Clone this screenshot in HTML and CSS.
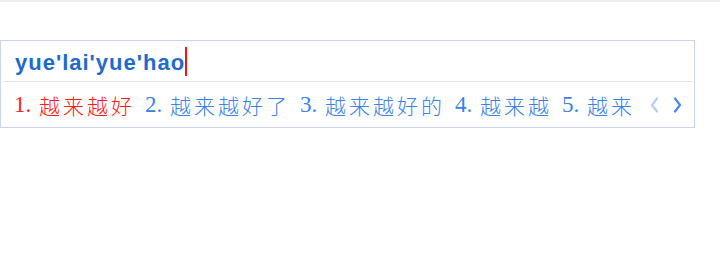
FILE: index.html
```html
<!DOCTYPE html>
<html lang="zh-CN">
<head>
<meta charset="utf-8">
<title>输入法候选框</title>
<link rel="stylesheet" href="styles.css">
</head>
<body>
<div class="topbar"></div>
<div class="ime">
  <div class="pinyin"><span class="code">yue'lai'yue'hao</span><span class="caret"></span></div>
  <div class="sep"></div>
  <div class="cands">
    <span class="cand active"><span class="num">1.</span><span class="word">越来越好</span></span>
    <span class="cand"><span class="num">2.</span><span class="word">越来越好了</span></span>
    <span class="cand"><span class="num">3.</span><span class="word">越来越好的</span></span>
    <span class="cand"><span class="num">4.</span><span class="word">越来越</span></span>
    <span class="cand"><span class="num">5.</span><span class="word">越来</span></span>
    <span class="pager">
      <svg class="arrow prev" width="9" height="16" viewBox="0 0 9 16"><polyline points="7,1.5 2,8 7,14.5" fill="none" stroke="#b7cdf4" stroke-width="2.2" stroke-linecap="round" stroke-linejoin="round"/></svg>
      <svg class="arrow next" width="9" height="16" viewBox="0 0 9 16"><polyline points="2,1.5 7,8 2,14.5" fill="none" stroke="#4a88ee" stroke-width="2.2" stroke-linecap="round" stroke-linejoin="round"/></svg>
    </span>
  </div>
</div>
</body>
</html>
```
FILE: styles.css
```css
html, body {
  margin: 0;
  padding: 0;
  background: #ffffff;
}
.topbar {
  height: 2px;
  background: #eeeeee;
}
.ime {
  box-sizing: border-box;
  width: 695px;
  margin-top: 38px;
  border: 1px solid #c9d5ea;
  background: #ffffff;
}
.pinyin {
  height: 40px;
  box-sizing: border-box;
  padding: 4px 0 0 14px;
  line-height: 36px;
  font-family: "Liberation Sans", Arial, sans-serif;
  font-weight: bold;
  font-size: 22px;
  letter-spacing: 1px;
  color: #1f6bcc;
  white-space: nowrap;
}
.code {
  display: inline-block;
  width: 170px;
}
.caret {
  display: inline-block;
  width: 1.5px;
  height: 29px;
  background: #ff1010;
  vertical-align: -6px;
}
.sep {
  height: 1px;
  margin: 0 2px 0 3px;
  background: #dfe5ef;
}
.cands {
  height: 45px;
  display: flex;
  align-items: center;
  gap: 11px;
  padding-left: 13px;
  color: #3a83e6;
  white-space: nowrap;
}
.cand {
  display: flex;
  align-items: center;
}
.cand.active {
  color: #ff1a1a;
}
.num {
  display: inline-block;
  width: 24px;
  font-family: "Liberation Serif", serif;
  font-size: 23px;
}
.word {
  font-family: "Noto Sans CJK SC", sans-serif;
  font-size: 21px;
  font-weight: 300;
  letter-spacing: 3px;
  padding-left: 1px;
  margin-right: -1px;
}
.pager {
  display: flex;
  align-items: center;
  gap: 14px;
  margin-left: 5px;
}
.arrow {
  display: block;
}
```
